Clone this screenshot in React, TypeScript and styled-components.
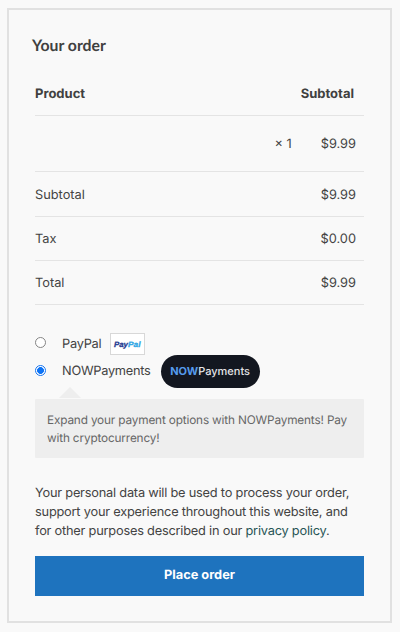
import React, { useState } from "react";
import styled, { createGlobalStyle } from "styled-components";

const GlobalStyle = createGlobalStyle`
  * { box-sizing: border-box; }
  body {
    margin: 0;
    background: #f9f9f9;
    color: #434343;
    font-family: Inter, "Liberation Sans", sans-serif;
    font-size: 12.8px;
    text-rendering: geometricPrecision;
  }
`;

const Card = styled.main`
  width: 385px;
  height: 615px;
  margin: 8px 0 9px 7px;
  padding: 24px 26px 0;
  border: 2px solid #e1e1e1;
  background: #f9f9f9;
`;

const Title = styled.h1`
  margin: 0 0 15px -3px;
  font: 700 15.8px/24px Lato, sans-serif;
  color: #404040;
`;

const OrderTable = styled.div`
  display: flex;
  flex-direction: column;
`;

const OrderRow = styled.div<{ $height: number; $head?: boolean }>`
  display: flex;
  align-items: center;
  height: ${(p) => p.$height}px;
  padding-top: ${(p) => (p.$head ? 0 : 2)}px;
  padding-right: ${(p) => (p.$head ? 10 : 8)}px;
  border-bottom: 1px solid #e4e4e4;
  font-size: ${(p) => (p.$head ? 13 : 12.8)}px;
  font-weight: ${(p) => (p.$head ? 700 : 400)};
  color: ${(p) => (p.$head ? "#404040" : "#434343")};
`;

const Label = styled.span`
  flex: 1;
`;

const Quantity = styled.span`
  margin-right: 29px;
`;

const Amount = styled.span``;

const Methods = styled.div`
  display: flex;
  flex-direction: column;
  padding-top: 25px;
`;

const Method = styled.label<{ $height: number }>`
  display: flex;
  align-items: center;
  height: ${(p) => p.$height}px;
`;

const MethodName = styled.span`
  padding-top: 1px;
  letter-spacing: -0.26px;
`;

const Radio = styled.input`
  appearance: none;
  width: 11px;
  height: 11px;
  margin: 0 16px 2px 0;
  border: 1px solid #858585;
  border-radius: 50%;
  background: #fff;
  &:checked {
    border-color: #1675f2;
    background: radial-gradient(circle, #0d73f5 0 3.1px, #fff 3.7px);
  }
`;

const PayPalLogo = styled.span`
  display: inline-flex;
  align-items: center;
  justify-content: center;
  width: 35px;
  height: 22px;
  margin-left: 9px;
  border: 1px solid #d8d8d8;
  background: #fff;
`;

const NowLogo = styled.span`
  display: inline-flex;
  align-items: center;
  justify-content: center;
  width: 99px;
  height: 33px;
  margin-left: 10px;
  padding-bottom: 1px;
  border-radius: 17px;
  background: #131720;
  color: #e4e4e7;
  font-size: 11px;
  font-weight: 500;
`;

const NowWord = styled.span`
  color: #559bed;
  font-weight: 700;
`;

const Description = styled.div`
  position: relative;
  height: 59px;
  margin-top: 14px;
  padding: 12px;
  border-radius: 1px;
  background: #eeeeee;
  color: #666;
  font-size: 11.8px;
  line-height: 18px;
  letter-spacing: -0.16px;
  &::before {
    content: "";
    position: absolute;
    top: -12px;
    left: 24px;
    border: 11px solid transparent;
    border-top: 0;
    border-bottom: 11px solid #eeeeee;
  }
`;

const Line = styled.span`
  display: block;
  white-space: nowrap;
`;

const Privacy = styled.p`
  margin: 26px 0 14px;
  line-height: 19.2px;
  letter-spacing: -0.22px;
`;

const PolicyLink = styled.a`
  color: #275455;
  text-decoration: none;
`;

const SubmitButton = styled.button`
  display: block;
  width: 100%;
  height: 40px;
  padding: 0;
  border: 0;
  background: #1e73be;
  color: #fff;
  font: 700 12.8px/40px Inter, sans-serif;
  text-rendering: inherit;
`;

const totals = [
  { label: "Subtotal", amount: "$9.99", height: 45 },
  { label: "Tax", amount: "$0.00", height: 44 },
  { label: "Total", amount: "$9.99", height: 44 },
];

export default function App() {
  const [method, setMethod] = useState("now");
  return (
    <>
      <GlobalStyle />
      <Card>
        <Title>Your order</Title>
        <OrderTable>
          <OrderRow $height={43} $head>
            <Label>Product</Label>
            <Amount>Subtotal</Amount>
          </OrderRow>
          <OrderRow $height={56}>
            <Label />
            <Quantity>× 1</Quantity>
            <Amount>$9.99</Amount>
          </OrderRow>
          {totals.map((t) => (
            <OrderRow key={t.label} $height={t.height}>
              <Label>{t.label}</Label>
              <Amount>{t.amount}</Amount>
            </OrderRow>
          ))}
        </OrderTable>
        <Methods>
          <Method $height={27}>
            <Radio type="radio" name="method" checked={method === "paypal"} onChange={() => setMethod("paypal")} />
            <MethodName>PayPal</MethodName>
            <PayPalLogo>
              <svg width="29" height="12" viewBox="0 0 29 12">
                <g fontFamily="Liberation Sans, sans-serif" fontSize="7.8" fontWeight="700" fontStyle="italic" strokeWidth="0.3">
                  <text x="1" y="8.5" fill="#253b90" stroke="#253b90" textLength="14" lengthAdjust="spacingAndGlyphs">Pay</text>
                  <text x="15" y="8.5" fill="#2fa6e4" stroke="#2fa6e4" textLength="12.5" lengthAdjust="spacingAndGlyphs">Pal</text>
                </g>
              </svg>
            </PayPalLogo>
          </Method>
          <Method $height={28}>
            <Radio type="radio" name="method" checked={method === "now"} onChange={() => setMethod("now")} />
            <MethodName>NOWPayments</MethodName>
            <NowLogo>
              <NowWord>NOW</NowWord>Payments
            </NowLogo>
          </Method>
        </Methods>
        <Description>
          <Line>Expand your payment options with NOWPayments! Pay</Line>
          <Line>with cryptocurrency!</Line>
        </Description>
        <Privacy>
          <Line>Your personal data will be used to process your order,</Line>
          <Line>support your experience throughout this website, and</Line>
          <Line>
            for other purposes described in our <PolicyLink>privacy policy</PolicyLink>.
          </Line>
        </Privacy>
        <SubmitButton type="button">Place order</SubmitButton>
      </Card>
    </>
  );
}
